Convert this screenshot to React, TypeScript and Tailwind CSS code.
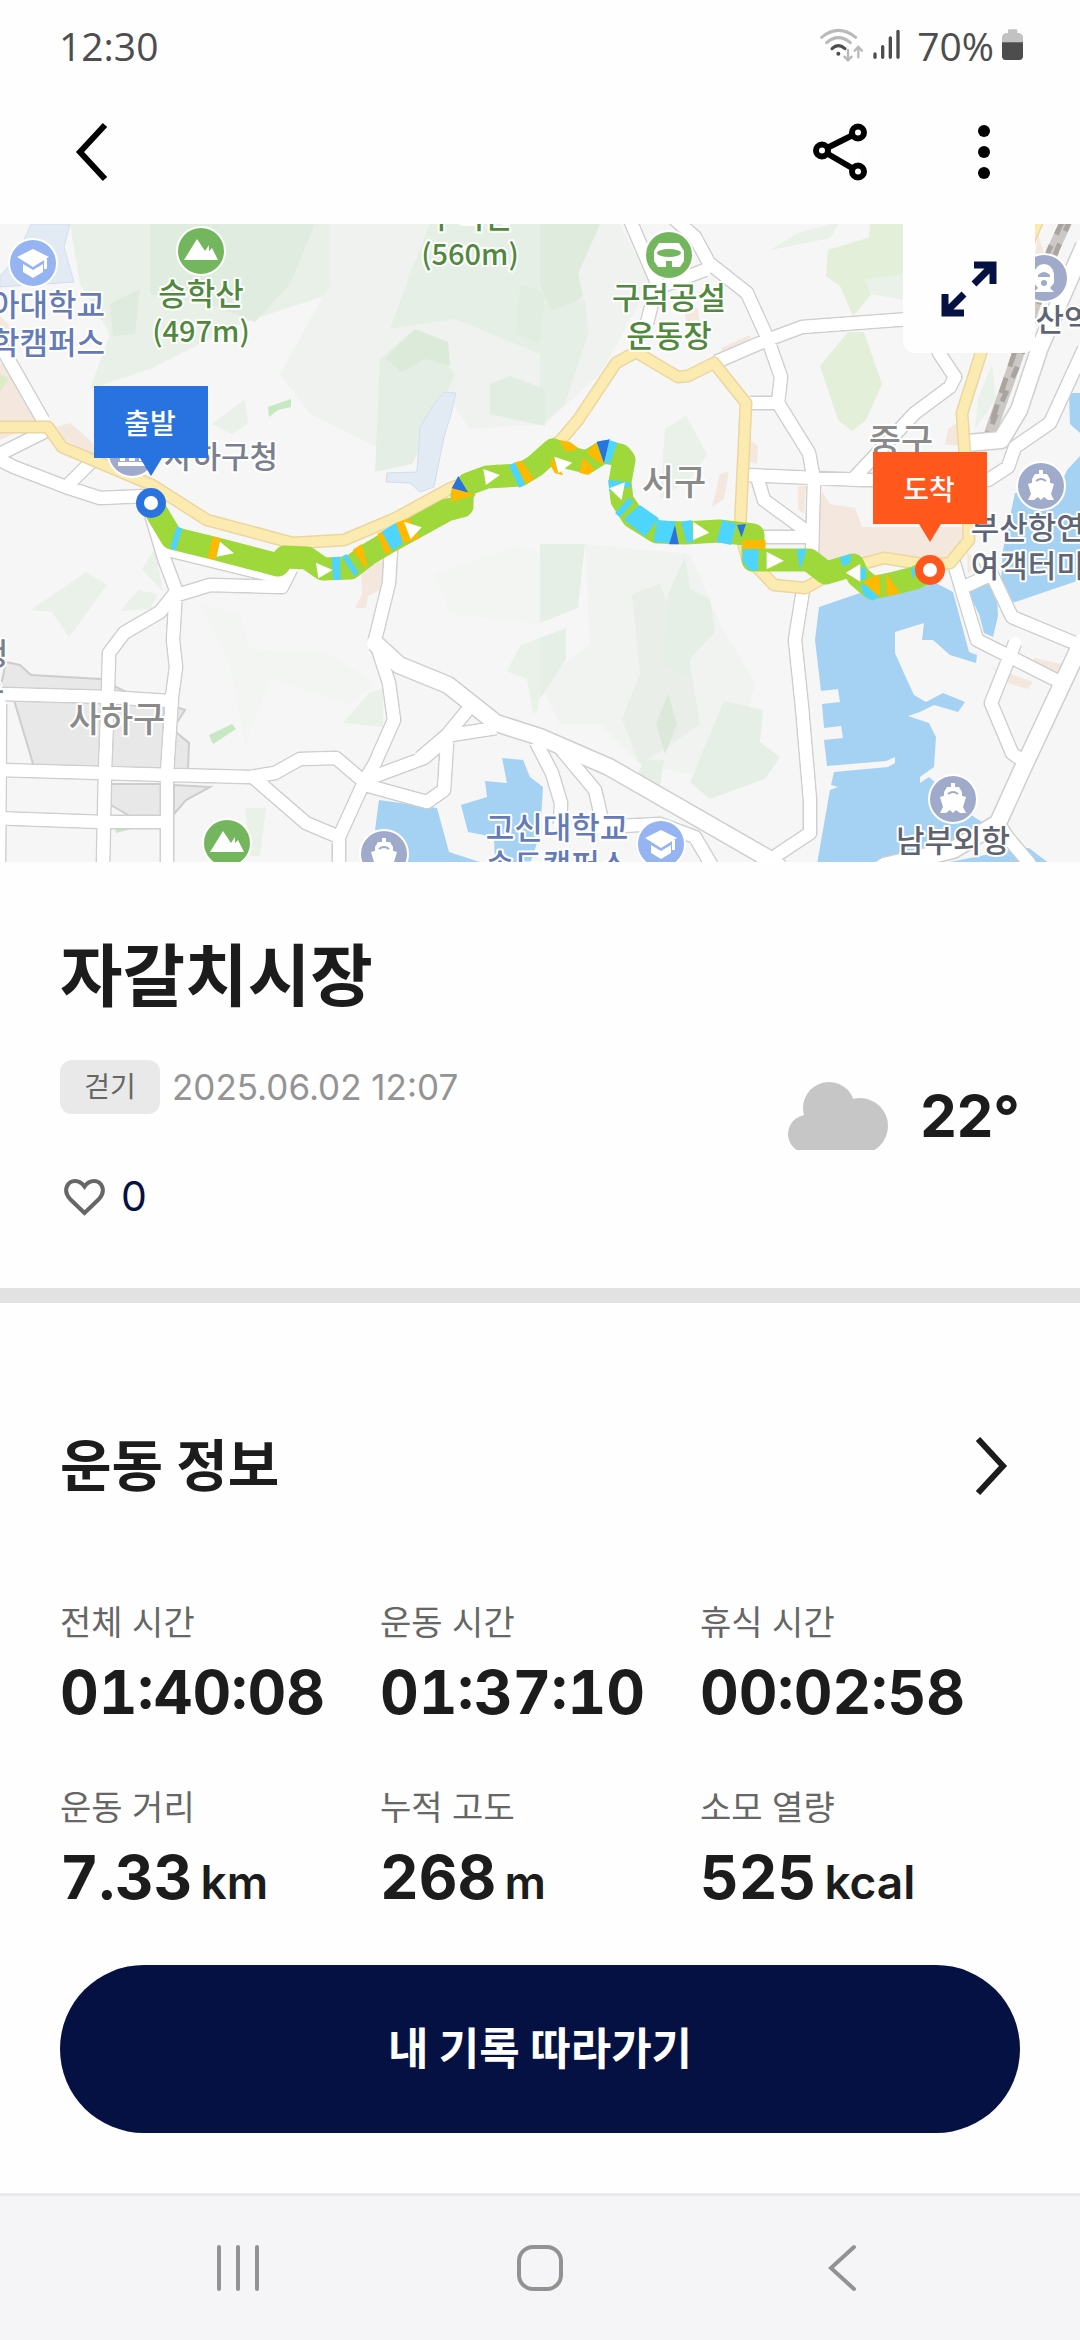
import React from "react";

const ROADS = [
  "M-4 112 L7 133 L43 196",
  "M48 206 L0 230",
  "M-4 234 L14 243 L66 263 L100 274 L146 272",
  "M67 262 L90 239",
  "M151 290 L164 334 L176 366 L173 416 L176 443 L172 473 L167 549 L167 642",
  "M176 368 L160 388 L124 409 L109 429 L108 469 L105 546 L103 642",
  "M174 372 L210 361 L282 363 L291 345",
  "M168 326 L282 354",
  "M2 470 L108 473 L169 477",
  "M-4 546 L103 549 L172 551 L250 553 L275 549 L300 535 L336 534 L362 556",
  "M365 556 L424 534 L451 511 L496 504",
  "M391 325 L389 359 L375 416 L389 459 L394 496 L375 539 L365 556 L339 613 L339 642",
  "M470 483 L447 511 L420 534",
  "M254 554 L306 599 L339 613",
  "M365 561 L427 578 L444 566 L447 519",
  "M0 480 L-1 642",
  "M-4 594 L103 598 L167 598",
  "M536 518 L552 549 L561 579 L560 600",
  "M555 518 L595 566 L604 605",
  "M600 603 L660 600 L695 613 L712 642",
  "M803 366 L795 416 L802 483 L810 576 L810 609 L774 633 L760 642",
  "M953 336 L967 383 L977 416 L1056 456",
  "M985 336 L1012 393 L1084 423",
  "M1015 419 L991 479 L1012 529 L1024 538",
  "M964 363 L992 350",
  "M630 -4 L657 59 L647 99",
  "M660 63 L705 46",
  "M671 -8 L695 13 L709 39 L747 69 L767 113 L781 153 L778 179 L809 229 L814 256 L812 330",
  "M716 138 L767 116 L802 103 L950 92",
  "M750 179 L778 179",
  "M744 251 L864 256 L988 256 L1008 243 L1015 223 L1050 199 L1084 125",
  "M939 110 L939 129 L955 153 L950 163 L915 189 L855 253",
  "M757 253 L764 276 L809 309",
  "M760 313 L810 313",
  "M1030 640 L1008 614 L998 599",
];

const WIDE_ROADS = [
  "M375 419 L399 441 L448 461 L496 499 L540 513 L609 543 L771 636 L780 644",
  "M1082 418 L1022 546 L998 599 L953 626 L884 642",
  "M968 219 L1001 216 L1019 186 L1040 123 L1084 22",
];

const HIGHWAYS = [
  "M-4 203 L48 203 L62 223 L152 261 L207 296 L293 319 L344 316 L396 294 L451 264 L500 246",
  "M545 228 L561 216 L578 196 L616 139 L636 128 L678 153 L688 152 L714 139 L746 179 L740 306 L747 333 L774 361 L805 364 L836 347 L884 334 L929 341 L950 339 L969 316 L967 263 L962 189 L981 129 L1038 -4",
];

const ROUTE =
  "M151 279 L172 314 L213 324 L278 341 L285 333 L307 334 L323 345 L350 344 L367 331 L387 319 L447 286 L462 282 L462 271 L468 260 L487 253 L520 251 L535 242 L553 226 L570 234 L587 238 L603 228 L620 231 L624 236 L620 258 L622 276 L633 293 L657 308 L685 309 L719 307 L753 311 L753 336 L809 336 L826 349 L853 341 L858 352 L872 364 L895 359 L915 354 L930 346";

const CYAN = "#4dd5fd";
const AMBER = "#ffb900";
const BLUE = "#2873df";

type Band = [string, string];

const BANDS_WEST: Band[] = [
  [CYAN, "110,320 127,325 108,390 90,385"],
  [AMBER, "218,350 242,355 225,420 203,415"],
  [CYAN, "575,412 600,410 602,480 580,480"],
  [CYAN, "605,410 620,402 657,460 643,468"],
  [AMBER, "638,390 665,372 682,435 678,445"],
  [AMBER, "712,342 725,335 757,395 735,402"],
  [CYAN, "725,335 768,308 790,370 757,392"],
  [AMBER, "768,308 808,295 840,355 790,370"],
  [BLUE, "955,168 985,218 935,205"],
  [AMBER, "935,205 985,218 1005,225 935,245"],
  [CYAN, "1107,137 1125,127 1155,195 1138,203"],
  [AMBER, "1125,127 1145,122 1183,178 1158,190"],
  [AMBER, "1258,60 1290,66 1315,84 1300,92 1275,92"],
  [AMBER, "1235,110 1270,166 1245,160 1232,138"],
  [AMBER, "1330,112 1364,150 1345,165 1318,158"],
  [AMBER, "1340,98 1368,68 1392,132 1380,130"],
  [BLUE, "1370,65 1410,58 1392,130"],
  [CYAN, "1408,60 1432,68 1410,130 1393,130"],
  [CYAN, "1405,180 1470,187 1474,200 1408,213"],
  ["#fff", "240,365 282,400 230,410"],
  ["#fff", "528,428 578,450 535,475"],
  ["#fff", "792,305 845,322 812,358"],
  ["#fff", "1030,147 1080,165 1038,195"],
  ["#fff", "1243,110 1297,128 1255,160"],
  ["#fff", "1455,187 1445,240 1408,205"],
];

const BANDS_MIDDLE: Band[] = [
  [CYAN, "258,833 272,845 232,892 218,880"],
  [CYAN, "290,855 345,895 305,950 243,898"],
  [CYAN, "340,900 395,905 378,970 330,965"],
  [BLUE, "392,915 403,973 375,973"],
  [CYAN, "410,905 440,900 445,965 425,968"],
  ["#fff", "445,905 492,938 445,960"],
  [CYAN, "530,900 570,912 555,975 512,965"],
  [BLUE, "572,915 598,912 585,952"],
  [AMBER, "588,960 655,960 655,986 588,986"],
];

const BANDS_EAST: Band[] = [
  [CYAN, "590,28 635,28 632,94 605,88 588,62"],
  ["#fff", "658,35 708,62 658,88"],
  [CYAN, "745,28 775,28 755,90"],
  [CYAN, "870,52 905,42 900,70 880,80"],
  [AMBER, "882,85 900,125 890,105"],
  [CYAN, "930,85 947,85 945,120 930,120"],
  [CYAN, "930,135 945,135 985,172 965,182 940,165"],
  [AMBER, "938,125 985,103 988,172"],
  [AMBER, "1005,100 1045,160 1008,168"],
  [CYAN, "1075,85 1092,85 1085,120"],
  ["#fff", "930,72 930,125 888,98"],
];

function Bands({ items }: { items: Band[] }) {
  return (
    <>
      {items.map(([fill, points]) => (
        <polygon key={points} fill={fill} points={points} />
      ))}
    </>
  );
}

function Roads({ paths, edge, fill, width }: { paths: string[]; edge: string; fill: string; width: number }) {
  const d = paths.join(" ");
  return (
    <g fill="none" strokeLinejoin="round">
      <path d={d} stroke={edge} strokeWidth={width + 3} />
      <path d={d} stroke={fill} strokeWidth={width} strokeLinecap="round" />
    </g>
  );
}

function Label({ x, y, fill, size = 31, children }: { x: number; y: number; fill: string; size?: number; children: string }) {
  return (
    <text
      x={x}
      y={y}
      fill={fill}
      fontSize={size}
      fontWeight={500}
      textAnchor="middle"
      stroke="#fff"
      strokeWidth="4"
      strokeLinejoin="round"
      paintOrder="stroke"
    >
      {children}
    </text>
  );
}

function Poi({ x, y, fill, children }: { x: number; y: number; fill: string; children: React.ReactNode }) {
  return (
    <g transform={`translate(${x} ${y})`}>
      <circle r="24" fill={fill} stroke="#fff" strokeWidth="2" />
      {children}
    </g>
  );
}

const School = () => (
  <g fill="#fff">
    <path d="M0 -14 L16 -6 L0 4 L-16 -6 Z" />
    <path d="M-10 1 L0 7 L10 1 V9 L0 15 L-10 9 Z" />
    <path d="M11 -4 h3 v10 h-3 z" />
  </g>
);
const Mountain = () => <path fill="#fff" d="M-17 9 L-4 -12 L4 0 L8 -6 L8 0 L11 -3 L17 9 Z" />;
const Ship = () => (
  <g fill="#fff">
    <path d="M-2 -16 h4 v4 h4 l3 5 v4 h-18 v-4 l3 -5 h4 z" />
    <path d="M-13 -2 L0 -6 L13 -2 L10 8 L13 14 H7 L3 11 L0 14 L-3 11 L-7 14 H-13 L-10 8 Z" />
    <path d="M-5 -5 Q0 -9 5 -5" fill="none" stroke="#a0abcb" strokeWidth="2" />
  </g>
);

function RouteMap() {
  return (
    <svg
      viewBox="0 0 1080 638"
      className="block h-auto w-full font-['Noto_Sans_CJK_KR',sans-serif]"
      role="img"
      aria-label="이동 경로 지도"
    >
      <rect width="1080" height="638" fill="#f6f6f6" />

      <g fill="#e9f1e8">
        <path d="M70 0 H480 L420 50 L330 70 L240 100 L150 145 L90 165 L110 110 L80 60 Z" fill="#e9f0e8" />
        <path d="M330 0 H620 L650 60 L600 150 L545 200 L470 205 L440 160 L390 230 L310 190 L280 150 L330 60 Z" fill="#eff2ee" />
        <path d="M150 0 H315 L290 60 L255 98 L210 80 L150 70 Z" fill="#e1ece0" />
        <path d="M110 80 L140 65 L135 110 L113 112 Z" fill="#dfebde" />
        <path d="M430 0 H560 L570 90 L540 130 L455 95 L390 105 L410 50 Z" fill="#e6efe5" />
        <path d="M540 0 H600 L578 50 L583 72 L555 95 L540 60 Z" fill="#dfebdd" />
        <path d="M540 90 L585 75 L588 110 L565 180 L540 202 Z" fill="#e6efe5" />
        <path d="M520 60 L545 68 L540 120 L516 110 Z M490 160 L510 152 L545 165 V202 L490 190 Z" fill="#e2ede1" />
        <path d="M380 135 L415 105 L455 150 L430 205 L412 240 L375 248 Z" fill="#e5eee4" />
        <path d="M415 105 L448 118 L450 142 L425 135 L402 148 L385 134 Z" fill="#dceada" />
        <path d="M212 200 L245 175 L248 200 L232 210 Z" />
        <path d="M828 26 L900 4 L880 60 L853 92 L840 62 L826 52 Z M870 -2 H905 V50 L866 58 Z M820 142 L848 108 L864 108 L882 160 L866 196 L852 207 L838 196 Z" fill="#e4efda" />
        <path d="M865 55 L905 50 V76 L870 70 Z M665 205 L686 192 L707 230 L690 255 L660 275 Z M978 175 L992 140 L996 175 L975 205 Z M770 26 L800 8 L840 -2 L830 14 Z" />
        <path d="M31 386 L86 348 L107 361 L69 413 L52 388 Z M120 387 L138 366 L158 370 L150 385 Z M142 345 L155 325 L163 368 Z" />
        <path d="M343 499 L368 470 L383 464 L383 503 Z M507 447 L520 422 L545 412 L538 485 L533 490 L527 455 Z" />
        <path d="M585 320 L690 330 L720 400 L755 460 L740 520 L690 550 L640 540 L600 500 L560 500 L540 460 L590 420 Z" fill="#f0f3ef" />
        <path d="M632 370 L660 360 L690 440 L700 500 L665 525 L640 540 L622 495 L640 450 Z" fill="#e9eee8" />
        <path d="M540 320 H585 L578 384 L540 399 Z M540 414 L566 404 L566 435 L540 475 Z M668 370 L685 333 L690 365 L710 375 L715 408 L690 435 L690 455 L664 442 Z M724 477 L763 486 L760 518 L780 533 L765 555 L710 575 L690 558 Z M644 536 L664 536 L660 562 L635 556 Z" fill="#e6efe5" />
        <path d="M668 470 L677 500 L665 530 L656 500 Z" fill="#dce9da" />
        <path d="M200 380 L240 390 L250 425 L330 430 L375 460 L350 480 L270 455 L245 520 L230 440 Z M435 350 L520 320 L540 330 V400 L450 390 Z" fill="#f2f5f1" />
        <path d="M245 584 L266 584 L260 632 L250 632 Z" />
      </g>
      <path fill="#c6e8c2" d="M268 183 L291 175 L291 183 L278 186 L269 193 Z M209 511 L232 500 L236 505 L213 520 Z M115 604 H136 L116 609 Z" />

      <path fill="#e2eaf4" stroke="#d3deed" strokeWidth="1" d="M31 0 H70 L64 23 L74 58 L0 63 V52 L16 34 Z M444 168 L456 169 L451 190 L444 213 L434 263 L420 268 L410 259 L386 258 L387 249 L417 248 L420 203 L432 183 Z" />

      <g fill="#f4e8de">
        <path d="M0 92 L18 110 L0 136 V139 L10 142 L43 198 L0 216 Z" />
        <path d="M56 203 L70 199 L92 218 L98 232 L60 214 Z" />
        <path d="M822 267 L830 280 L855 284 L862 303 L967 303 L965 320 L950 336 L928 338 L884 330 L838 345 L812 326 L816 306 Z" />
        <path d="M721 124 L750 111 V117 L722 131 Z M720 250 L729 247 L724 275 L712 283 Z M750 216 L758 222 L757 240 L750 238 Z M684 86 L698 84 L699 96 L686 97 Z M948 205 L960 197 V222 L945 220 Z M798 262 L806 262 L804 290 L798 285 Z" />
        <path d="M361 346 L385 335 L380 366 L368 372 L366 384 L355 384 L362 370 Z" />
        <path d="M1034 434 L1062 440 L1062 452 L1034 445 Z M992 443 L1033 458 L1028 465 L1010 460 Z M1038 10 L1046 36 L1034 40 Z M967 328 L978 338 L968 350 Z" />
      </g>
      <path fill="#dcebc8" d="M0 150 L9 155 L0 168 Z" />

      <path fill="#e8e8e8" stroke="#cdcdcd" strokeWidth="2" d="M6 438 L20 441 L31 451 L101 455 L108 459 L130 470 L0 466 Z M14 476 L164 478 L163 547 L34 543 Z M174 482 L185 486 L176 500 L176 508 L189 519 L188 546 H172 Z M109 560 H162 V593 L130 592 L109 580 Z M174 561 L210 563 L186 576 L174 590 Z" />

      <g fill="#a5d2f3">
        <path d="M819 383 L815 416 L821 467 L838 465 L840 478 L822 480 L824 504 L841 502 L843 514 L824 516 L827 542 L886 537 L895 533 L895 539 L888 543 L834 548 L831 561 L838 563 L830 566 L817 640 H867 L953 618 L998 608 L974 593 L929 553 L920 559 V553 L934 543 L936 513 L929 499 L908 492 L920 488 L934 481 L958 488 L965 478 L943 469 L926 478 L914 471 L907 456 L895 429 L895 408 L924 399 L922 416 L933 416 L950 431 L976 439 L977 431 L969 428 L953 368 L936 359 L860 369 Z" />
        <path d="M940 640 L1010 626 L1029 624 L1050 640 Z" />
        <path d="M1080 232 L1067 246 L1060 262 L1015 269 L1003 326 L1001 356 L1012 379 L1080 356 Z" />
        <path d="M967 366 L996 352 L998 392 L993 413 L984 409 L979 390 Z" />
        <path d="M1080 169 H1069 L1070 200 L1080 209 Z" />
        <path d="M379 576 L437 584 L449 628 L486 640 H406 L375 606 Z" />
        <path d="M502 534 L523 536 L530 553 L543 563 L540 610 L530 640 H495 L494 613 L468 608 L461 581 L487 573 L485 557 L507 559 Z" />
      </g>

      <path d="M1067 -4 L1053 26 L1015 139 L988 215" fill="none" stroke="#cbc8c5" strokeWidth="12" />
      <path d="M1063 -4 L1049 26 L1011 139 L986 215" fill="none" stroke="#a9a4a0" strokeWidth="5" strokeDasharray="16 12" />
      <path d="M1070 -4 L1057 26 L1019 139 L992 200" fill="none" stroke="#a9a4a0" strokeWidth="5" strokeDasharray="12 14" />

      <Roads paths={ROADS} edge="#cfcfcf" fill="#fff" width={12} />
      <Roads paths={WIDE_ROADS} edge="#cfcfcf" fill="#fff" width={16} />
      <path d={ROADS.join(" ")} fill="none" stroke="#fff" strokeWidth="12" strokeLinejoin="round" />
      <Roads paths={HIGHWAYS} edge="#ecd6a0" fill="#fcebb1" width={10} />

      <Poi x={33} y={39} fill="#96b3f2"><School /></Poi>
      <Poi x={201} y={27} fill="#74b65e"><Mountain /></Poi>
      <Poi x={669} y={31} fill="#74b65e">
        <path fill="#fff" d="M-10 -12 H10 L15 -4 V6 L11 12 H3 V6 H-3 V12 H-11 L-15 6 V-4 Z" />
        <ellipse cy="-2" rx="12" ry="4" fill="#74b65e" />
      </Poi>
      <Poi x={1044} y={54} fill="#a0abcb">
        <path fill="#fff" d="M-10 -4 Q-8 -14 0 -14 Q8 -14 10 -4 V5 L6 10 L10 14 H-10 L-6 10 L-10 5 Z" />
        <path fill="#a0abcb" d="M-6 -3 Q0 -9 6 -3 V-1 H-6 Z" />
        <circle cy="5" r="3" fill="#a0abcb" />
      </Poi>
      <Poi x={1041} y={262} fill="#a0abcb"><Ship /></Poi>
      <Poi x={953} y={575} fill="#a0abcb"><Ship /></Poi>
      <Poi x={384} y={630} fill="#a0abcb"><Ship /></Poi>
      <Poi x={227} y={619} fill="#74b65e"><Mountain /></Poi>
      <Poi x={661} y={620} fill="#96b3f2"><School /></Poi>
      <Poi x={132} y={229} fill="#a0abcb">
        <path fill="#fff" d="M-14 9 h28 v4 h-28 z M-12 -2 h5 v10 h-5 z M-3 -2 h6 v10 h-6 z M7 -2 h5 v10 h-5 z" />
      </Poi>

      <Label x={48} y={92} fill="#647bb8">아대학교</Label>
      <Label x={48} y={130} fill="#647bb8">학캠퍼스</Label>
      <Label x={201} y={81} fill="#50893d">승학산</Label>
      <Label x={201} y={118} fill="#50893d" size={29}>(497m)</Label>
      <Label x={470} y={4} fill="#50893d">구덕산</Label>
      <Label x={470} y={41} fill="#50893d" size={29}>(560m)</Label>
      <Label x={669} y={85} fill="#50893d">구덕공설</Label>
      <Label x={669} y={123} fill="#50893d">운동장</Label>
      <Label x={221} y={244} fill="#7a7f90">사하구청</Label>
      <Label x={674} y={271} fill="#8a8a8a" size={35}>서구</Label>
      <Label x={901} y={230} fill="#8a8a8a" size={35}>중구</Label>
      <Label x={117} y={508} fill="#8a8a8a" size={35}>사하구</Label>
      <Label x={1064} y={107} fill="#5f6577">산역</Label>
      <Label x={1042} y={315} fill="#5f6577">부산항연안</Label>
      <Label x={1042} y={353} fill="#5f6577">여객터미널</Label>
      <Label x={953} y={628} fill="#5f6370">남부외항</Label>
      <Label x={557} y={615} fill="#647bb8">고신대학교</Label>
      <Label x={557} y={652} fill="#647bb8">송도캠퍼스</Label>
      <Label x={-6} y={441} fill="#7a7f90">청</Label>
      <Label x={-10} y={476} fill="#7a7f90">누</Label>

      <path d={ROUTE} fill="none" stroke="#9fd83a" strokeWidth="23" strokeLinejoin="round" strokeLinecap="round" />
      <g transform="translate(140 196) scale(.3333)"><Bands items={BANDS_WEST} /></g>
      <g transform="translate(540 -4) scale(.3444 .3333)"><Bands items={BANDS_MIDDLE} /></g>
      <g transform="translate(540 316) scale(.3444 .3333)"><Bands items={BANDS_EAST} /></g>

      <circle cx="151" cy="279" r="11" fill="#fff" stroke={BLUE} strokeWidth="8" />
      <circle cx="930" cy="346" r="11" fill="#fff" stroke="#ff571c" strokeWidth="8" />
      <path fill={BLUE} d="M94 162 H208 V234 H162 L151 252 L140 234 H94 Z" />
      <path fill="#ff571c" d="M873 228 H987 V300 H941 L930 318 L919 300 H873 Z" />
      <g fill="#fff" fontSize="28" fontWeight="500" textAnchor="middle">
        <text x="150" y="210">출발</text>
        <text x="929" y="276">도착</text>
      </g>
    </svg>
  );
}

function StatusBar() {
  return (
    <div className="flex h-[90px] items-center justify-between pr-[57px] pl-[59px] font-['Open_Sans',sans-serif] text-[39px] leading-none text-[#4d4d4d]">
      <time>12:30</time>
      <div className="flex items-center">
        <svg width="81" height="34" viewBox="0 0 243 102" aria-hidden="true">
          <g fill="none" strokeLinecap="round">
            <path d="M5 28 Q55 -14 107 28" stroke="#b9b9b9" strokeWidth="9" />
            <path d="M20 44 Q55 14 91 44" stroke="#b9b9b9" strokeWidth="9" />
            <path d="M36 62 Q55 44 75 62" stroke="#4d4d4d" strokeWidth="9" />
            <path d="M84 66 V96 M73 86 L84 97 L95 86 M115 88 V58 M104 68 L115 57 L126 68" stroke="#b9b9b9" strokeWidth="7" />
            <path d="M165 78 V88 M188 56 V88 M211 30 V88 M234 10 V88" stroke="#4d4d4d" strokeWidth="10" />
          </g>
          <circle cx="55" cy="77" r="6" fill="#4d4d4d" />
        </svg>
        <span className="mr-2 ml-4">70%</span>
        <svg width="21" height="32" viewBox="0 0 63 96" aria-hidden="true">
          <path d="M22 1 H42 Q46 1 46 5 V12 H52 Q63 15 63 26 V41 H0 V26 Q0 15 11 12 H18 V5 Q18 1 22 1 Z" fill="#c2c2c2" />
          <path d="M0 40 H63 V82 Q63 93 52 93 H11 Q0 93 0 82 Z" fill="#4d4d4d" />
        </svg>
      </div>
    </div>
  );
}

function Header() {
  return (
    <header className="flex h-[134px] items-start justify-between pt-8 pr-[84px] pl-[74px]">
      <button aria-label="뒤로" className="flex h-[60px] items-center">
        <svg width="34" height="60" viewBox="0 0 34 60" fill="none" stroke="#000" strokeWidth="6">
          <path d="M31 3 L6 30 L31 57" />
        </svg>
      </button>
      <div className="flex items-center gap-[104px]">
        <button aria-label="공유" className="flex h-[60px] items-center">
          <svg width="56" height="58" viewBox="0 0 56 58" fill="#fff" stroke="#000" strokeWidth="6">
            <path d="M46 9.500 L10 27.500 L46 48.500" />
            <circle cx="46" cy="9.500" r="6" />
            <circle cx="10" cy="27.500" r="6" />
            <circle cx="46" cy="48.500" r="6" />
          </svg>
        </button>
        <button aria-label="더보기" className="flex h-[60px] items-center px-1.5">
          <svg width="12" height="56" viewBox="0 0 12 56" fill="#000">
            <circle cx="6" cy="7" r="6" />
            <circle cx="6" cy="28" r="6" />
            <circle cx="6" cy="49" r="6" />
          </svg>
        </button>
      </div>
    </header>
  );
}

const STATS = [
  { label: "전체 시간", value: "01:40:08" },
  { label: "운동 시간", value: "01:37:10" },
  { label: "휴식 시간", value: "00:02:58" },
  { label: "운동 거리", value: "7.33", unit: "km" },
  { label: "누적 고도", value: "268", unit: "m" },
  { label: "소모 열량", value: "525", unit: "kcal" },
];

export default function App() {
  return (
    <div className="flex min-h-screen flex-col bg-[#fefefe] font-['Inter','Noto_Sans_CJK_KR',sans-serif] text-[#1c1c1c]">
      <StatusBar />
      <Header />

      <main className="flex-1">
        <div className="relative overflow-hidden">
          <RouteMap />
          <button aria-label="지도 확대" className="absolute top-0 right-[45px] flex h-[129px] w-[132px] items-center justify-center rounded-b-xl bg-[#fefefe]">
            <svg width="56" height="56" viewBox="0 0 56 56" fill="none" stroke="#051142" strokeWidth="7">
              <path d="M33 4 H52 V23 M51 5 L33 23 M4 33 V52 H23 M5 51 L23 33" />
            </svg>
          </button>
        </div>

        <section className="px-[60px] pt-[74px] pb-[67px]">
          <h1 className="text-[68px] leading-[80px] font-bold">자갈치시장</h1>
          <div className="mt-11 flex items-start justify-between">
            <div>
              <div className="flex items-center gap-3">
                <span className="flex h-[54px] w-[100px] items-center justify-center rounded-xl bg-[#e9e9e9] text-[28px] text-[#666]">걷기</span>
                <time className="text-[35px] leading-[54px] text-[#949494]">2025.06.02 12:07</time>
              </div>
              <button className="mt-[59px] flex h-12 items-center gap-4 pl-1 text-[41px] text-[#051142]" aria-label="좋아요 0">
                <svg width="41" height="37" viewBox="0 0 41 37" fill="none" stroke="#666" strokeWidth="4">
                  <path d="M20.500 34 L6 20 C-2 11 4 2 11 2 C16 2 18 4 20.500 7.500 C23 4 25 2 30 2 C37 2 43 11 35 20 Z" />
                </svg>
                <span>0</span>
              </button>
            </div>
            <div className="mt-[22px] flex items-center gap-8">
              <svg width="100" height="68" viewBox="0 0 100 68" fill="#c6c6c6" role="img" aria-label="흐림">
                <circle cx="19" cy="52" r="19" />
                <circle cx="41" cy="26" r="26" />
                <circle cx="72" cy="44" r="28" />
                <rect x="19" y="34" width="53" height="34" />
              </svg>
              <span className="text-[58px] leading-[68px] font-bold">22°</span>
            </div>
          </div>
        </section>

        <section className="border-t-[15px] border-[#e2e2e2] px-[60px] pt-[123px] pb-[60px]">
          <div className="flex h-20 items-center justify-between">
            <h2 className="text-[56px] leading-[80px] font-bold">운동 정보</h2>
            <button aria-label="운동 정보 자세히" className="pr-3">
              <svg width="34" height="58" viewBox="0 0 34 58" fill="none" stroke="#1c1c1c" strokeWidth="6">
                <path d="M4 2 L29 29 L4 56" />
              </svg>
            </button>
          </div>
          <dl className="mt-[93px] grid grid-cols-3 gap-y-[60px]">
            {STATS.map((s) => (
              <div key={s.label}>
                <dt className="text-[34px] leading-[48px] text-[#666]">{s.label}</dt>
                <dd className="mt-[13px] flex h-16 items-baseline gap-2 text-[60px] leading-[64px] font-bold tabular-nums">
                  {s.value}
                  {s.unit && <span className="text-[46px] leading-none font-semibold">{s.unit}</span>}
                </dd>
              </div>
            ))}
          </dl>
          <button className="mt-14 h-[168px] w-full rounded-full bg-[#051142] text-[44px] font-bold text-white">내 기록 따라가기</button>
        </section>
      </main>

      <nav className="grid h-[147px] grid-cols-3 items-center border-t-[3px] border-[#e9e9e9] bg-[#f5f5f8] px-[87px]">
        <button aria-label="최근 앱" className="flex justify-center">
          <svg width="48" height="48" viewBox="0 0 48 48" stroke="#929292" strokeWidth="4" strokeLinecap="round">
            <path d="M5 3 V45 M24 3 V45 M43 3 V45" />
          </svg>
        </button>
        <button aria-label="홈" className="flex justify-center">
          <svg width="48" height="48" viewBox="0 0 48 48" fill="none" stroke="#929292" strokeWidth="4">
            <rect x="3" y="3" width="42" height="42" rx="14" />
          </svg>
        </button>
        <button aria-label="뒤로 가기" className="flex justify-center">
          <svg width="30" height="48" viewBox="0 0 30 48" fill="none" stroke="#929292" strokeWidth="4" strokeLinecap="round">
            <path d="M27 3 L4 24 L27 45" />
          </svg>
        </button>
      </nav>
    </div>
  );
}
